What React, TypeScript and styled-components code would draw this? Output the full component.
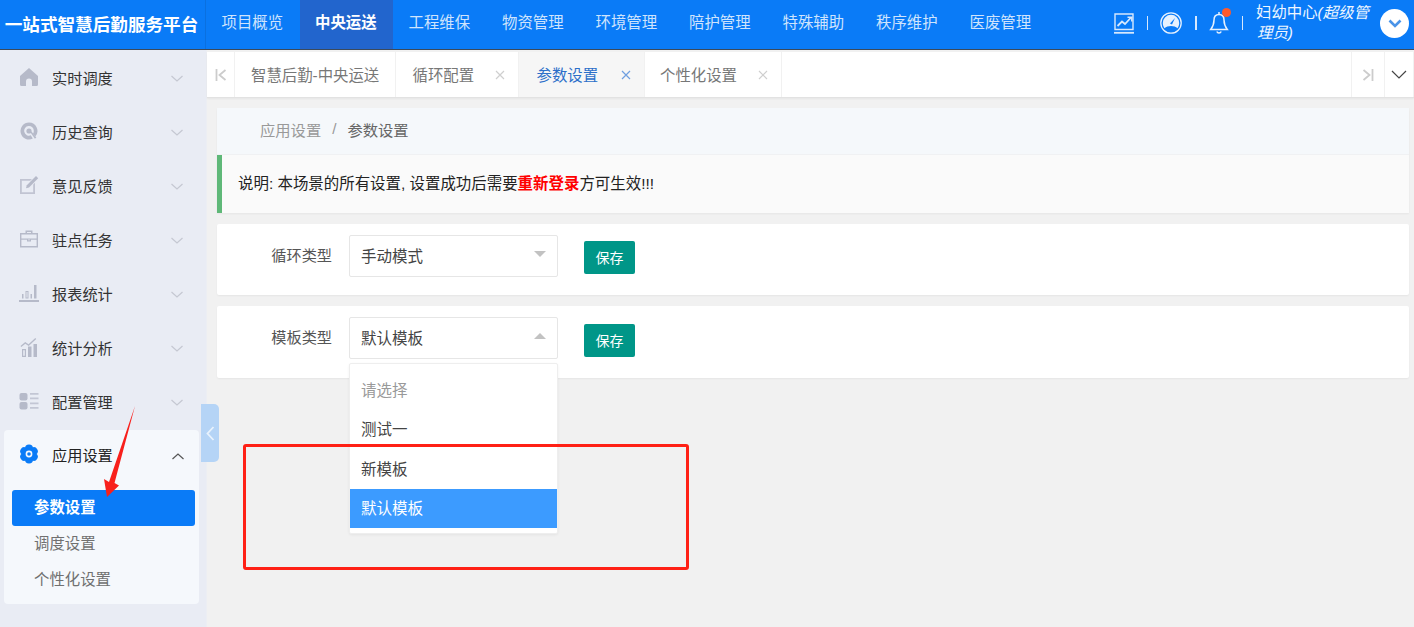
import type { ReactNode } from "react";
import styled, { createGlobalStyle } from "styled-components";

const GlobalStyle = createGlobalStyle`
  html, body {
    margin: 0;
    padding: 0;
    height: 100%;
    overflow: hidden;
    background: #f1f1f1;
    font-family: "Liberation Sans", "Noto Sans CJK SC", sans-serif;
    color: #333;
  }
  * { box-sizing: border-box; }
`;

const Page = styled.div`
  position: relative;
  width: 1414px;
  height: 627px;
  display: grid;
  grid-template-rows: 50px 1fr;
  overflow: hidden;
`;

const TopBar = styled.header`
  display: flex;
  background: #0a7bf7;
  border-bottom: 1px solid #3c4a5c;
`;

const Logo = styled.div`
  width: 206px;
  padding: 0 2px 3px 0;
  display: flex;
  align-items: center;
  justify-content: center;
  color: #fff;
  font-size: 17.6px;
  font-weight: 700;
  white-space: nowrap;
  border-right: 1px solid #0a70e0;
`;

const Nav = styled.nav`
  display: flex;
  flex: 1;
  padding-left: 0.3px;
`;

const NavItem = styled.div<{ $active?: boolean }>`
  width: 93.5px;
  padding: 0 1.5px 7px 0;
  display: flex;
  align-items: center;
  justify-content: center;
  font-size: 15.4px;
  font-weight: ${(p) => (p.$active ? 700 : 400)};
  color: ${(p) => (p.$active ? "#fff" : "#cfe4fd")};
  background: ${(p) => (p.$active ? "#2265cd" : "transparent")};
`;

const UserArea = styled.div`
  display: flex;
  align-items: center;
  padding: 0 5px 3px 0;
  color: #e6f1fe;
`;

const HeadIcon = styled.svg`
  display: block;
  flex: none;
`;

const Divider = styled.span`
  width: 1.5px;
  height: 14px;
  background: #d7e8fd;
  margin: 0 12px 0 13px;
`;

const BellWrap = styled.div`
  position: relative;
  width: 20px;
  height: 24px;
`;

const BellDot = styled.span`
  position: absolute;
  top: -3px;
  right: -2px;
  width: 9px;
  height: 9px;
  border-radius: 50%;
  background: #ff5a2c;
`;

const UserName = styled.div`
  width: 118px;
  margin-left: 1px;
  font-size: 15.4px;
  color: #eef6ff;
`;

const NameLine = styled.div<{ $indent?: boolean }>`
  height: 20px;
  line-height: 20px;
  white-space: nowrap;
  padding-left: ${(p) => (p.$indent ? "1px" : "0")};

  em {
    font-style: italic;
  }
`;

const AvatarButton = styled.div`
  width: 29px;
  height: 29px;
  margin-left: 6px;
  border-radius: 50%;
  background: #fff;
  display: flex;
  align-items: center;
  justify-content: center;
`;

const Body = styled.div`
  display: grid;
  grid-template-columns: 207px 1fr;
  min-height: 0;
`;

const Sidebar = styled.aside`
  background: #e9ecf4;
  padding-top: 2px;
  border-right: 1px solid #eceef3;
`;

const MenuRow = styled.div`
  height: 54px;
  display: flex;
  align-items: center;
  padding: 0 22px 0 20px;
  font-size: 15.2px;
  color: #333;
`;

const MenuIcon = styled.svg`
  width: 20px;
  height: 20px;
  margin: -4px 13px 0 -1px;
  flex: none;
  color: #b6bac9;
`;

const MenuLabel = styled.span`
  flex: 1;
  margin-bottom: 5px;
`;

const Group = styled.div`
  width: 195px;
  margin-left: 4px;
  padding-bottom: 6px;
  background: #f5f8fc;
  border-radius: 4px;
`;

const GroupHead = styled(MenuRow)`
  height: 52px;
  margin-bottom: 8px;
  padding: 0 14px 0 16px;
  color: #222;
`;

const SubItem = styled.div<{ $active?: boolean }>`
  height: 36px;
  margin: 0 4px 0 8px;
  padding: 0 0 5px 22px;
  display: flex;
  align-items: center;
  border-radius: 3px;
  font-size: 15.4px;
  font-weight: ${(p) => (p.$active ? 700 : 400)};
  color: ${(p) => (p.$active ? "#fff" : "#707070")};
  background: ${(p) => (p.$active ? "#0a7bf7" : "transparent")};
`;

const Main = styled.main`
  min-width: 0;
  padding-top: 2px;
`;

const TabBar = styled.div`
  height: 46px;
  display: flex;
  background: #fff;
  border-bottom: 1px solid #e2e2e2;
  box-shadow: 0 1px 2px rgba(0, 0, 0, 0.05);
`;

const TabEdge = styled.div<{ $width: number }>`
  width: ${(p) => p.$width}px;
  flex: none;
  display: flex;
  align-items: center;
  justify-content: center;
  border-right: 1px solid #f1f1f1;
`;

const Tab = styled.div<{ $width: number; $pad: number; $active?: boolean }>`
  width: ${(p) => p.$width}px;
  flex: none;
  padding: 0 13px 2px ${(p) => p.$pad}px;
  display: flex;
  align-items: center;
  font-size: 15.4px;
  color: ${(p) => (p.$active ? "#2c6fc9" : "#777")};
  background: ${(p) => (p.$active ? "#f6f6f6" : "transparent")};
  border-right: 1px solid #f1f1f1;
`;

const TabClose = styled.svg<{ $active?: boolean }>`
  margin: 2px 0 0 auto;
  color: ${(p) => (p.$active ? "#6f9fe0" : "#cfcfcf")};
`;

const TabSpacer = styled.div`
  flex: 1;
  border-right: 1px solid #f1f1f1;
`;

const Content = styled.div`
  padding: 10px 5px 0 10px;
  display: flex;
  flex-direction: column;
  gap: 11px;
`;

const TopCard = styled.section`
  background: #fafafa;
  box-shadow: 0 1px 2px rgba(0, 0, 0, 0.05);
`;

const Breadcrumb = styled.div`
  height: 47px;
  padding: 0 0 4px 43px;
  display: flex;
  align-items: center;
  gap: 11px;
  font-size: 15.3px;
  color: #999;
  background: #f5f8fb;
  border-bottom: 1px solid #f0f1f3;

  b {
    font-weight: 400;
    color: #666;
  }
`;

const Notice = styled.div`
  height: 58px;
  padding: 0 0 4px 16px;
  display: flex;
  align-items: center;
  font-size: 15.45px;
  color: #222;
  border-left: 5px solid #5fb878;

  strong {
    color: #f00;
    font-weight: 700;
  }
`;

const FormCard = styled.section<{ $height: number }>`
  height: ${(p) => p.$height}px;
  padding-top: 11px;
  display: flex;
  align-items: flex-start;
  background: #fff;
  border-radius: 2px;
  box-shadow: 0 1px 2px rgba(0, 0, 0, 0.05);
`;

const FieldLabel = styled.label`
  width: 115px;
  margin-top: 11px;
  line-height: 20px;
  text-align: right;
  font-size: 15.2px;
  color: #555;
`;

const SelectWrap = styled.div`
  position: relative;
  width: 209px;
  margin-left: 17px;
`;

const SelectBox = styled.div`
  height: 42px;
  padding: 0 11px 2px;
  display: flex;
  align-items: center;
  justify-content: space-between;
  font-size: 15.5px;
  color: #444;
  background: #fff;
  border: 1px solid #e6e6e6;
  border-radius: 2px;
`;

const Caret = styled.i<{ $up?: boolean }>`
  width: 0;
  height: 0;
  margin: -3px 0 0;
  border-left: 6px solid transparent;
  border-right: 6px solid transparent;
  border-top: ${(p) => (p.$up ? "0" : "6px solid #c2c2c2")};
  border-bottom: ${(p) => (p.$up ? "6px solid #c2c2c2" : "0")};
`;

const SaveButton = styled.button<{ $top: number }>`
  width: 51px;
  height: 33px;
  margin: ${(p) => p.$top}px 0 0 26px;
  padding: 0 0 2px;
  border: 0;
  border-radius: 2px;
  background: #009688;
  color: #fff;
  font: inherit;
  font-size: 14px;
`;

const Dropdown = styled.ul`
  position: absolute;
  top: 46px;
  left: 0;
  width: 100%;
  height: 171px;
  margin: 0;
  padding: 6px 0 0;
  list-style: none;
  background: #fff;
  border: 1px solid #eee;
  border-radius: 2px;
  box-shadow: 0 1px 3px rgba(0, 0, 0, 0.06);
  z-index: 2;
`;

const Option = styled.li<{ $muted?: boolean; $selected?: boolean }>`
  height: 39.5px;
  padding: 0 0 2px 11px;
  display: flex;
  align-items: center;
  font-size: 15.5px;
  color: ${(p) => (p.$selected ? "#fff" : p.$muted ? "#999" : "#444")};
  background: ${(p) => (p.$selected ? "#3c9bff" : "transparent")};
`;

const CollapseHandle = styled.div`
  position: absolute;
  top: 404px;
  left: 201px;
  width: 18px;
  height: 58px;
  display: flex;
  align-items: center;
  justify-content: center;
  background: #b5d4f6;
  border-radius: 0 5px 5px 0;
`;

const RedFrame = styled.div`
  position: absolute;
  top: 444px;
  left: 243px;
  width: 446px;
  height: 126px;
  border: 3px solid #ff2015;
  border-radius: 3px;
  z-index: 3;
`;

const RedArrow = styled.svg`
  position: absolute;
  top: 400px;
  left: 100px;
  z-index: 3;
`;

function Chevron({ up }: { up?: boolean }) {
  return (
    <svg width="14" height="8" viewBox="0 0 14 8" fill="none" stroke={up ? "#555" : "#c5c8d2"} strokeWidth="1.2">
      <path d={up ? "M1.5 7 7 2l5.5 5" : "M1.5 1 7 6l5.5-5"} />
    </svg>
  );
}

function CloseMark({ active }: { active?: boolean }) {
  return (
    <TabClose $active={active} width="10" height="10" viewBox="0 0 10 10" fill="none" stroke="currentColor" strokeWidth="1.2">
      <path d="M1 1l8 8M9 1 1 9" />
    </TabClose>
  );
}

const menu: { label: string; icon: ReactNode }[] = [
  {
    label: "实时调度",
    icon: <path d="M10 1 1 9v8.500A1.500 1.500 0 0 0 2.500 19H7v-4.500a3 3 0 0 1 6 0V19h4.500a1.500 1.500 0 0 0 1.500-1.500V9z" />,
  },
  {
    label: "历史查询",
    icon: (
      <>
        <path
          fillRule="evenodd"
          d="M10 1.500a8.500 8.500 0 1 0 3.800 16.100l-2-3.300A4.800 4.800 0 1 1 14.800 10c0 1-.3 1.900-.8 2.700l2.300 2.900A8.500 8.500 0 0 0 10 1.500z"
        />
        <circle cx="10" cy="10" r="2.600" />
        <path d="M11.500 11.500l1-1 4.800 6-1.400 1.200z" />
      </>
    ),
  },
  {
    label: "意见反馈",
    icon: (
      <>
        <path d="M1 4h12l-1.800 1.800H2.800v11.400h11.400V9.500L16 7.700V19H1z" opacity="0.8" />
        <path d="M17 1l2.200 2.200-9.200 9.300-3 .8.800-3z" />
      </>
    ),
  },
  {
    label: "驻点任务",
    icon: (
      <path
        fillRule="evenodd"
        d="M6.500 4V1.500h7V4h5.500v14.500H1V4zM8 4h4V3H8zM2.400 5.400v4h15.200v-4zm0 5.400v6.300h15.200v-6.300h-5.600v1.600H8v-1.600zM9.200 10.400v.8h1.600v-.8z"
      />
    ),
  },
  {
    label: "报表统计",
    icon: (
      <path
        fillRule="evenodd"
        d="M-.5 17h21v2h-21zM3 11h1.500v4.500H3zM6.500 8h3v7.500h-3zM7.500 9v5.500h1V9zM11.500 11h1.500v4.500h-1.500zM15 2h2.500v13.500H15z"
      />
    ),
  },
  {
    label: "统计分析",
    icon: (
      <>
        <path fillRule="evenodd" d="M3 12h4v8H3zM4.200 13.200v5.600h1.600v-5.600zM9 9.500h3.500V20H9zM14.500 7H18v13h-3.500z" />
        <path d="M1.500 9 6.200 5l3.300 2.300L16.300 1l.9 1-7.500 7-3.400-2.300-4 3.400z" />
      </>
    ),
  },
  {
    label: "配置管理",
    icon: (
      <>
        <rect x="0.500" y="2" width="8" height="7.500" rx="2" />
        <rect x="0.500" y="11" width="8" height="7.500" rx="2" />
        <path d="M11 2h8.500v1.800H11zM11 6.500h8.500v1.800H11zM11 11.500h8.500v1.800H11zM11 16h8.500v1.800H11z" opacity="0.75" />
      </>
    ),
  },
];

const navItems = ["项目概览", "中央运送", "工程维保", "物资管理", "环境管理", "陪护管理", "特殊辅助", "秩序维护", "医废管理"];

const gearLobes = [0, 60, 120, 180, 240, 300];

export default function App() {
  return (
    <>
      <GlobalStyle />
      <Page>
        <TopBar>
          <Logo>一站式智慧后勤服务平台</Logo>
          <Nav>
            {navItems.map((item) => (
              <NavItem key={item} $active={item === "中央运送"}>
                {item}
              </NavItem>
            ))}
          </Nav>
          <UserArea>
            <HeadIcon width="20" height="21" viewBox="0 0 20 21" fill="none" stroke="#d7e8fd" strokeWidth="1.4">
              <path d="M1 16.500V1h18v15.500z" />
              <path d="M3.500 13l4.500-4.500 3 2.500 6-6.500" strokeWidth="1.800" />
              <path d="M13.500 4.300h4.300v4.200" strokeWidth="1.500" />
              <path d="M0 19.800h20" strokeWidth="1.800" />
            </HeadIcon>
            <Divider />
            <HeadIcon width="22" height="22" viewBox="0 0 22 22" fill="none">
              <circle cx="11" cy="11" r="10.200" stroke="#e6f1fe" strokeWidth="1.300" />
              <path d="M2.800 11a8.200 8.200 0 0 1 16.400 0c0 2-.6 3.700-1.700 5.200-1.600-1.300-3.900-2.200-6.500-2.200s-4.900.9-6.500 2.200C3.400 14.700 2.800 13 2.800 11z" fill="#e6f1fe" />
              <path d="M10 11.500l5-5.500-3 6.500z" fill="#0a7bf7" />
            </HeadIcon>
            <Divider />
            <BellWrap>
              <HeadIcon width="20" height="24" viewBox="0 0 20 24" fill="none" stroke="#e6f1fe" strokeWidth="1.500">
                <path d="M10 3.500c-3.500 0-5 2.500-5 5.500 0 5-1 6.500-3.300 9.500h16.600C16 15.500 15 14 15 9c0-3-1.500-5.500-5-5.500z" />
                <path d="M7.800 20.500a2.400 2.400 0 0 0 4.400 0" />
                <path d="M10 1v2.500" />
              </HeadIcon>
              <BellDot />
            </BellWrap>
            <Divider />
            <UserName>
              <NameLine>
                妇幼中心<em>(超级管</em>
              </NameLine>
              <NameLine $indent>
                <em>理员)</em>
              </NameLine>
            </UserName>
            <AvatarButton>
              <svg width="14" height="9" viewBox="0 0 14 9" fill="none" stroke="#4a94e8" strokeWidth="2.600">
                <path d="M1.500 1.500 7 7l5.500-5.500" />
              </svg>
            </AvatarButton>
          </UserArea>
        </TopBar>
        <Body>
          <Sidebar>
            {menu.map((m) => (
              <MenuRow key={m.label}>
                <MenuIcon viewBox="0 0 20 20" fill="currentColor">
                  {m.icon}
                </MenuIcon>
                <MenuLabel>{m.label}</MenuLabel>
                <Chevron />
              </MenuRow>
            ))}
            <Group>
              <GroupHead>
                <MenuIcon viewBox="0 0 20 20">
                  {gearLobes.map((deg) => (
                    <circle key={deg} cx="10" cy="4.500" r="4" fill="#0a7bf7" transform={`rotate(${deg} 10 10)`} />
                  ))}
                  <circle cx="10" cy="10" r="6" fill="#0a7bf7" />
                  <circle cx="10" cy="10" r="3.400" fill="#f5f8fc" />
                  <circle cx="10" cy="10" r="1.800" fill="#0a7bf7" />
                </MenuIcon>
                <MenuLabel>应用设置</MenuLabel>
                <Chevron up />
              </GroupHead>
              <SubItem $active>参数设置</SubItem>
              <SubItem>调度设置</SubItem>
              <SubItem>个性化设置</SubItem>
            </Group>
          </Sidebar>
          <Main>
            <TabBar>
              <TabEdge $width={28}>
                <svg width="12" height="12" viewBox="0 0 12 12" fill="none" stroke="#cccccc" strokeWidth="1.800">
                  <path d="M1.500 0v12M10.500 1 4.500 6l6 5" />
                </svg>
              </TabEdge>
              <Tab $width={161} $pad={16}>
                智慧后勤-中央运送
              </Tab>
              <Tab $width={123} $pad={16.5}>
                循环配置
                <CloseMark />
              </Tab>
              <Tab $width={126} $pad={17.5} $active>
                参数设置
                <CloseMark active />
              </Tab>
              <Tab $width={137} $pad={15}>
                个性化设置
                <CloseMark />
              </Tab>
              <TabSpacer />
              <TabEdge $width={33}>
                <svg width="12" height="12" viewBox="0 0 12 12" fill="none" stroke="#cccccc" strokeWidth="1.800">
                  <path d="M10.500 0v12M1.500 1l6 5-6 5" />
                </svg>
              </TabEdge>
              <TabEdge $width={29}>
                <svg width="16" height="9" viewBox="0 0 16 9" fill="none" stroke="#444" strokeWidth="1.200">
                  <path d="M1 1l7 7 7-7" />
                </svg>
              </TabEdge>
            </TabBar>
            <Content>
              <TopCard>
                <Breadcrumb>
                  应用设置 <span>/</span> <b>参数设置</b>
                </Breadcrumb>
                <Notice>
                  说明: 本场景的所有设置, 设置成功后需要<strong>重新登录</strong>方可生效!!!
                </Notice>
              </TopCard>
              <FormCard $height={71}>
                <FieldLabel>循环类型</FieldLabel>
                <SelectWrap>
                  <SelectBox>
                    手动模式
                    <Caret />
                  </SelectBox>
                </SelectWrap>
                <SaveButton $top={6}>保存</SaveButton>
              </FormCard>
              <FormCard $height={72}>
                <FieldLabel>模板类型</FieldLabel>
                <SelectWrap>
                  <SelectBox>
                    默认模板
                    <Caret $up />
                  </SelectBox>
                  <Dropdown>
                    <Option $muted>请选择</Option>
                    <Option>测试一</Option>
                    <Option>新模板</Option>
                    <Option $selected>默认模板</Option>
                  </Dropdown>
                </SelectWrap>
                <SaveButton $top={7}>保存</SaveButton>
              </FormCard>
            </Content>
          </Main>
        </Body>
        <CollapseHandle>
          <svg width="9" height="15" viewBox="0 0 9 15" fill="none" stroke="#e8f2fd" strokeWidth="1.800">
            <path d="M7.500 1 1.500 7.500l6 6.500" />
          </svg>
        </CollapseHandle>
        <RedFrame />
        <RedArrow width="40" height="100" viewBox="0 0 40 100" fill="#f8201c">
          <path d="M35 6 14.500 83 19 85.500 7 97 4 79 9 82z" />
        </RedArrow>
      </Page>
    </>
  );
}
